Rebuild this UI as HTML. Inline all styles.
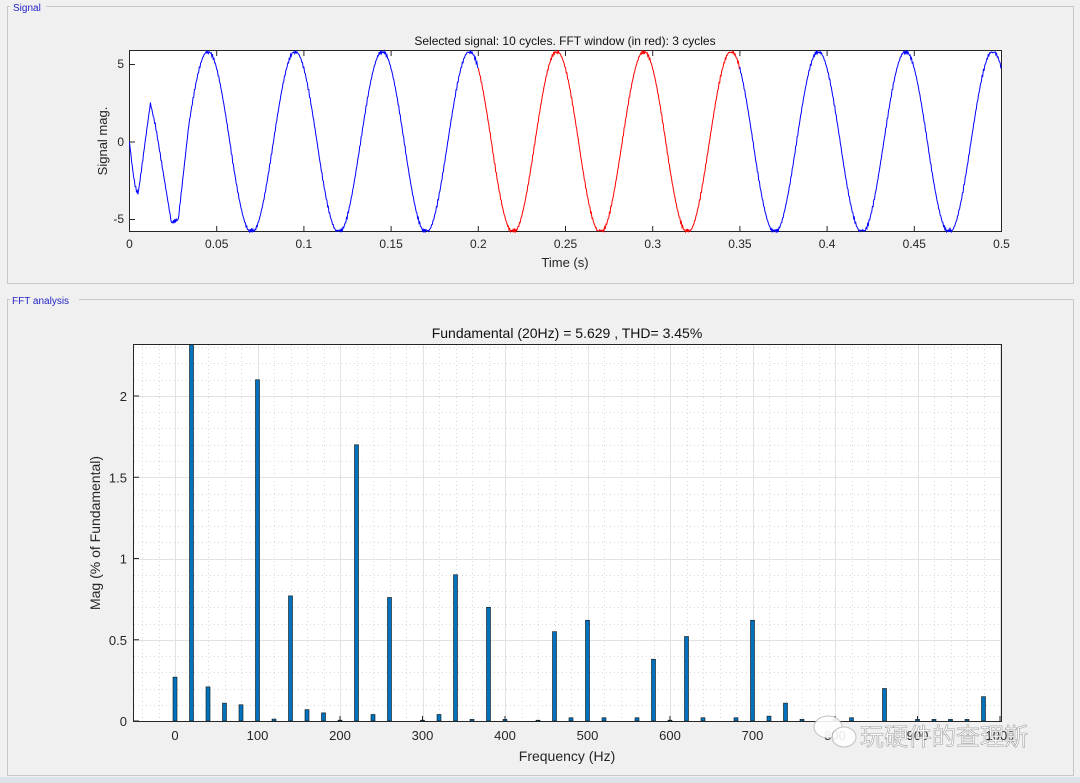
<!DOCTYPE html>
<html><head><meta charset="utf-8"><style>
html,body{margin:0;padding:0;background:#f0f0f0;width:1080px;height:783px;overflow:hidden}
svg{display:block;font-family:"Liberation Sans","Noto Sans CJK SC",sans-serif}
</style></head><body>
<svg id="s" width="1080" height="783" xmlns="http://www.w3.org/2000/svg">
<rect width="1080" height="783" fill="#f0f0f0"/>
<path d="M46 6.5H1073.5V283.5H7.5V6.5H10" fill="none" stroke="#c8c8c8"/>
<text x="13" y="11" font-size="10" fill="#2424c8">Signal</text>
<path d="M79 299.5H1073.5V775.5H7.5V299.5H10" fill="none" stroke="#c8c8c8"/>
<text x="12" y="304" font-size="10" fill="#2424c8">FFT analysis</text>
<rect x="0" y="777" width="1080" height="6" fill="#dde3ea"/>
<rect x="129.5" y="50.5" width="872" height="181" fill="#fff" stroke="#262626"/>
<g id="sig"></g>
<text x="565" y="45" font-size="12" text-anchor="middle" fill="#111">Selected signal: 10 cycles. FFT window (in red): 3 cycles</text>
<text x="565" y="267" font-size="13" text-anchor="middle" fill="#262626">Time (s)</text>
<text transform="translate(107,141) rotate(-90)" font-size="13" text-anchor="middle" fill="#262626">Signal mag.</text>
<g font-size="12" fill="#262626" text-anchor="end">
<text x="124" y="68">5</text><text x="124" y="146">0</text><text x="124" y="223">-5</text></g>
<g id="sx" font-size="12" fill="#262626" text-anchor="middle"></g>
<rect x="133.5" y="344.5" width="868" height="377" fill="#fff"/>
<g id="grid"></g>
<g id="bars"></g>
<rect x="133.5" y="344.5" width="868" height="377" fill="none" stroke="#262626"/>
<text x="567" y="338" font-size="14" text-anchor="middle" fill="#111">Fundamental (20Hz) = 5.629 , THD= 3.45%</text>
<text x="567" y="761" font-size="14" text-anchor="middle" fill="#262626">Frequency (Hz)</text>
<text transform="translate(100,533) rotate(-90)" font-size="14" text-anchor="middle" fill="#262626">Mag (% of Fundamental)</text>
<g id="fy" font-size="13" fill="#262626" text-anchor="end"></g>
<g id="fx" font-size="13" fill="#262626" text-anchor="middle"></g>
<g opacity="0.9">
<ellipse cx="828" cy="727" rx="14" ry="11" fill="#fff" stroke="#bbb"/>
<ellipse cx="844" cy="737" rx="12" ry="10" fill="#fff" stroke="#bbb"/>
<text x="860" y="745" font-size="24" fill="#fff" stroke="#999" stroke-width="0.6">玩硬件的查理斯</text>
</g>
</svg>
<script>
var NS="http://www.w3.org/2000/svg";
function el(t,a,p,txt){var e=document.createElementNS(NS,t);for(var k in a)e.setAttribute(k,a[k]);if(txt!=null)e.textContent=txt;document.getElementById(p).appendChild(e);return e;}
function X(t){return 129.5+t*1744;}function Y(v){return 142-v*15.5;}
function sn(t){return 5.85*Math.sin(2*Math.PI*20*(t-0.0325));}
function f(t){
 var s=sn(t);
 if(t<0.034){
  var tr;
  if(t<0.005)tr=-3.3*Math.sin(Math.PI*t/0.01);
  else if(t<0.012)tr=-3.3+5.8*(t-0.005)/0.007;
  else if(t<0.015)tr=2.5-(t-0.012)/0.003*1.5;
  else if(t<0.024)tr=1.0-6.2*(t-0.015)/0.009;
  else if(t<0.028)tr=-5.2+0.2*(t-0.024)/0.004;
  else tr=-5.0+(t-0.028)/0.006*(sn(0.034)+5.0);
  s=tr;
 }
 if(s>5.8)s=5.8-(s-5.8)*0.5;if(s<-5.75)s=-5.75+( -5.75-s)*0.5;
 s+=0.08*Math.sin(t*9000)+0.05*Math.sin(t*23000);
 return s;
}
function seg(a,b,c){var d="";for(var t=a;t<=b+1e-9;t+=0.0004){d+=(d?"L":"M")+X(t).toFixed(1)+" "+Y(f(t)).toFixed(1);}el("path",{d:d,fill:"none",stroke:c,"stroke-width":1},"sig");}
seg(0,0.2,"#0000ff");seg(0.2,0.35,"#ff0000");seg(0.35,0.5,"#0000ff");
for(var i=0;i<=10;i++){var t=i*0.05,x=X(t);el("line",{x1:x,x2:x,y1:231,y2:226,stroke:"#262626"},"sig");el("line",{x1:x,x2:x,y1:51,y2:56,stroke:"#262626"},"sig");el("text",{x:x,y:248},"sx",i==0?"0":i==10?"0.5":(+t.toFixed(2)).toString());}
[5,0,-5].forEach(function(v){el("line",{x1:130,x2:135,y1:Y(v),y2:Y(v),stroke:"#262626"},"sig");});
function FX(h){return 175+h*0.825;}function FY(m){return 721-m*162.5;}
for(var h=-40;h<=1000;h+=20){var x=Math.round(FX(h))+0.5;if(x<134||x>1001)continue;var maj=(h%100==0);el("line",{x1:x,x2:x,y1:345,y2:721,stroke:maj?"#e2e2e2":"#d8d8d8","stroke-dasharray":maj?"":"1,3"},"grid");}
for(var m=0.1;m<2.35;m+=0.1){var y=Math.round(FY(m))+0.5;var maj=Math.abs(m*2-Math.round(m*2))<1e-6;el("line",{x1:134,x2:1001,y1:y,y2:y,stroke:maj?"#e2e2e2":"#d8d8d8","stroke-dasharray":maj?"":"1,3"},"grid");}
var B=[[0,0.27],[20,2.4],[40,0.21],[60,0.11],[80,0.1],[100,2.1],[120,0.012],[140,0.77],[160,0.07],[180,0.05],[200,0.005],[220,1.7],[240,0.04],[260,0.76],[300,0.005],[320,0.04],[340,0.9],[360,0.01],[380,0.7],[400,0.01],[440,0.005],[460,0.55],[480,0.02],[500,0.62],[520,0.02],[560,0.02],[580,0.38],[600,0.005],[620,0.52],[640,0.02],[680,0.02],[700,0.62],[720,0.03],[740,0.11],[760,0.01],[800,0.01],[820,0.02],[860,0.2],[900,0.01],[920,0.01],[940,0.01],[960,0.01],[980,0.15]];
B.forEach(function(b){var x=FX(b[0]),y=Math.max(FY(b[1]),344.5);el("rect",{x:x-2,y:y,width:4,height:721-y,fill:"#0072bd",stroke:"#111","stroke-width":0.6},"bars");});
for(var h=0;h<=1000;h+=100){var x=FX(h);el("line",{x1:x,x2:x,y1:721,y2:716,stroke:"#262626"},"grid");el("text",{x:x,y:740},"fx",h.toString());}
[[0,"0"],[0.5,"0.5"],[1,"1"],[1.5,"1.5"],[2,"2"]].forEach(function(v){var y=FY(v[0]);el("line",{x1:134,x2:139,y1:y,y2:y,stroke:"#262626"},"grid");el("text",{x:127,y:y+5},"fy",v[1]);});
</script>
</body></html>
